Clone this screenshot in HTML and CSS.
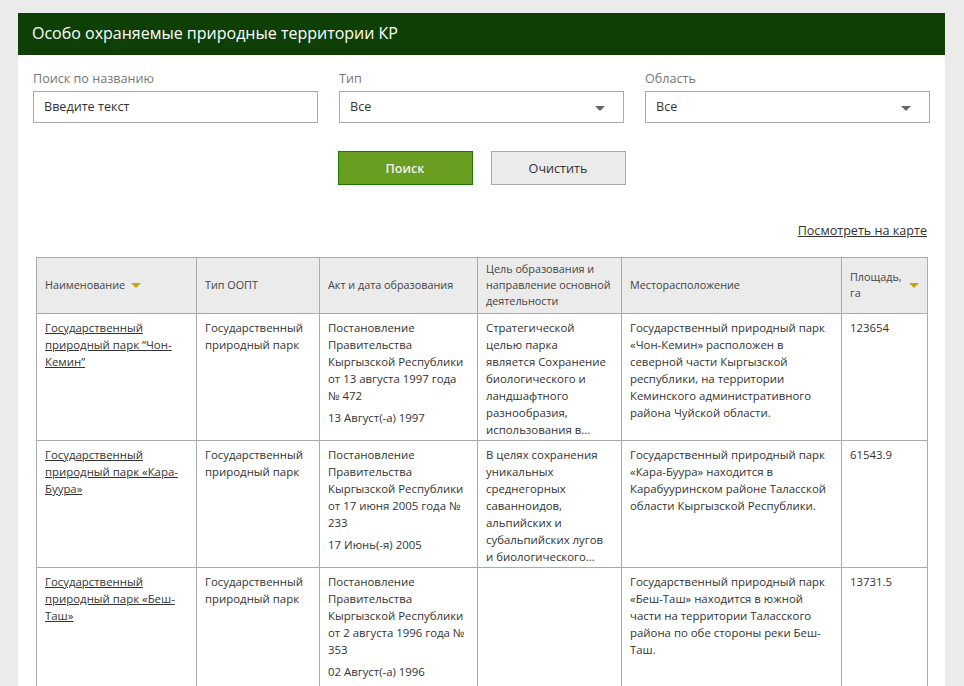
FILE: index.html
```html
<!DOCTYPE html>
<html lang="ru">
<head>
<meta charset="utf-8">
<title>Особо охраняемые природные территории КР</title>
<link rel="stylesheet" href="styles.css">
</head>
<body>
<div class="panel">
  <div class="panel-head">Особо охраняемые природные территории КР</div>
  <div class="filters">
    <div class="field">
      <label class="label">Поиск по названию</label>
      <div class="input">Введите текст</div>
    </div>
    <div class="field">
      <label class="label">Тип</label>
      <div class="input select">Все<span class="caret"></span></div>
    </div>
    <div class="field">
      <label class="label">Область</label>
      <div class="input select">Все<span class="caret"></span></div>
    </div>
  </div>
  <div class="actions">
    <button class="btn btn-primary">Поиск</button>
    <button class="btn btn-default">Очистить</button>
  </div>
  <div class="map-link-row"><a class="map-link" href="#">Посмотреть на карте</a></div>
  <table class="grid">
    <colgroup>
      <col class="c1"><col class="c2"><col class="c3"><col class="c4"><col class="c5"><col class="c6">
    </colgroup>
    <thead>
      <tr>
        <th><span class="th-inner"><span>Наименование</span><span class="sort sort-inline"></span></span></th>
        <th>Тип ООПТ</th>
        <th>Акт и дата образования</th>
        <th>Цель образования и направление основной деятельности</th>
        <th>Месторасположение</th>
        <th><span class="th-flex"><span>Площадь, га</span><span class="sort"></span></span></th>
      </tr>
    </thead>
    <tbody>
      <tr>
        <td><a href="#">Государственный природный парк “Чон-Кемин”</a></td>
        <td>Государственный природный парк</td>
        <td><p>Постановление Правительства Кыргызской Республики от 13 августа 1997 года № 472</p><p>13 Август(-а) 1997</p></td>
        <td><div class="clamp">Стратегической целью парка является&nbsp;Сохранение биологического и ландшафтного разнообразия, использования в рекреационных, научных и просветительских целях</div></td>
        <td>Государственный природный парк «Чон-Кемин» расположен в северной части Кыргызской республики, на территории Кеминского административного района Чуйской области.</td>
        <td>123654</td>
      </tr>
      <tr>
        <td><a href="#">Государственный природный парк «Кара-Буура»</a></td>
        <td>Государственный природный парк</td>
        <td><p>Постановление Правительства Кыргызской Республики от 17 июня 2005 года № 233</p><p>17 Июнь(-я) 2005</p></td>
        <td><div class="clamp">В целях сохранения уникальных среднегорных саванноидов, альпийских и субальпийских лугов и биологического разнообразия</div></td>
        <td>Государственный природный парк «Кара-Буура» находится в Карабууринском районе Таласской области Кыргызской Республики.</td>
        <td>61543.9</td>
      </tr>
      <tr>
        <td><a href="#">Государственный природный парк «Беш-Таш»</a></td>
        <td>Государственный природный парк</td>
        <td><p>Постановление Правительства Кыргызской Республики от 2 августа 1996 года № 353</p><p>02 Август(-а) 1996</p></td>
        <td></td>
        <td>Государственный природный парк «Беш-Таш» находится в южной части на территории Таласского района по обе стороны реки Беш-Таш.</td>
        <td>13731.5</td>
      </tr>
    </tbody>
  </table>
</div>
</body>
</html>
```

FILE: styles.css
```css
html, body {
  margin: 0;
  padding: 0;
}
body {
  background: #ebebeb;
  font-family: "Open Sans", "Noto Sans", sans-serif;
  color: #333;
  height: 686px;
  overflow: hidden;
}
.panel {
  margin: 13px 0 0 18px;
  width: 927px;
  background: #fff;
  padding-bottom: 40px;
}
.panel-head {
  background: #0e3f04;
  color: #fff;
  height: 42px;
  line-height: 40px;
  padding-left: 14px;
  font-size: 16px;
  font-weight: 500;
}
.filters {
  display: grid;
  grid-template-columns: 285px 285px 285px;
  column-gap: 21px;
  padding: 15px 15px 0;
}
.field {
  display: flex;
  flex-direction: column;
}
.label {
  font-size: 12.6px;
  color: #777;
  line-height: 18px;
  margin-bottom: 3px;
}
.input {
  height: 32px;
  box-sizing: border-box;
  border: 1px solid #aaa;
  padding: 0 10px;
  font-size: 12.6px;
  line-height: 30px;
  color: #333;
  position: relative;
}
.caret {
  position: absolute;
  right: 18px;
  top: 14px;
  width: 0;
  height: 0;
  border-left: 5px solid transparent;
  border-right: 5px solid transparent;
  border-top: 5px solid #666;
}
.actions {
  display: flex;
  justify-content: center;
  gap: 18px;
  margin-top: 28px;
}
.btn {
  width: 135px;
  height: 34px;
  box-sizing: border-box;
  font-family: "Open Sans", "Noto Sans", sans-serif;
  font-size: 12.6px;
  padding: 0;
  cursor: pointer;
}
.btn-primary {
  background: #6a9e20;
  border: 1px solid #1c7a00;
  color: #f2f2f2;
  font-weight: 600;
}
.btn-default {
  background: #ebebeb;
  border: 1px solid #aaa;
  color: #333;
}
.map-link-row {
  display: flex;
  justify-content: flex-end;
  padding-right: 18px;
  margin-top: 37px;
  line-height: 18px;
}
.map-link {
  font-size: 12.6px;
  color: #333;
  text-decoration: underline;
}
.grid {
  margin: 17px 0 0 18px;
  width: 891px;
  table-layout: fixed;
  border-collapse: collapse;
  font-size: 11.4px;
}
.c1 { width: 160px; }
.c2 { width: 123px; }
.c3 { width: 158px; }
.c4 { width: 144px; }
.c5 { width: 220px; }
.c6 { width: 86px; }
.grid th,
.grid td {
  border: 1px solid #aaa;
  text-align: left;
  padding: 5px 8px 2px;
}
.grid th {
  background: #ebebeb;
  font-weight: 400;
  font-size: 10.8px;
  line-height: 16px;
  color: #444;
  height: 48px;
  vertical-align: middle;
  padding: 3px 8px 4px;
}
.grid td {
  vertical-align: top;
  line-height: 17px;
  color: #333;
}
.grid td a {
  color: #333;
  text-decoration: underline;
}
.grid p {
  margin: 0 0 5px;
}
.clamp {
  display: -webkit-box;
  -webkit-box-orient: vertical;
  -webkit-line-clamp: 7;
  overflow: hidden;
}
.th-inner {
  display: inline-flex;
  align-items: center;
}
.th-flex {
  display: flex;
  align-items: center;
  justify-content: space-between;
}
.th-flex > span:first-child {
  width: 56px;
}
.sort {
  display: inline-block;
  width: 0;
  height: 0;
  border-left: 5px solid transparent;
  border-right: 5px solid transparent;
  border-top: 5px solid #c8a600;
}
.sort-inline {
  margin-left: 6px;
}
```
